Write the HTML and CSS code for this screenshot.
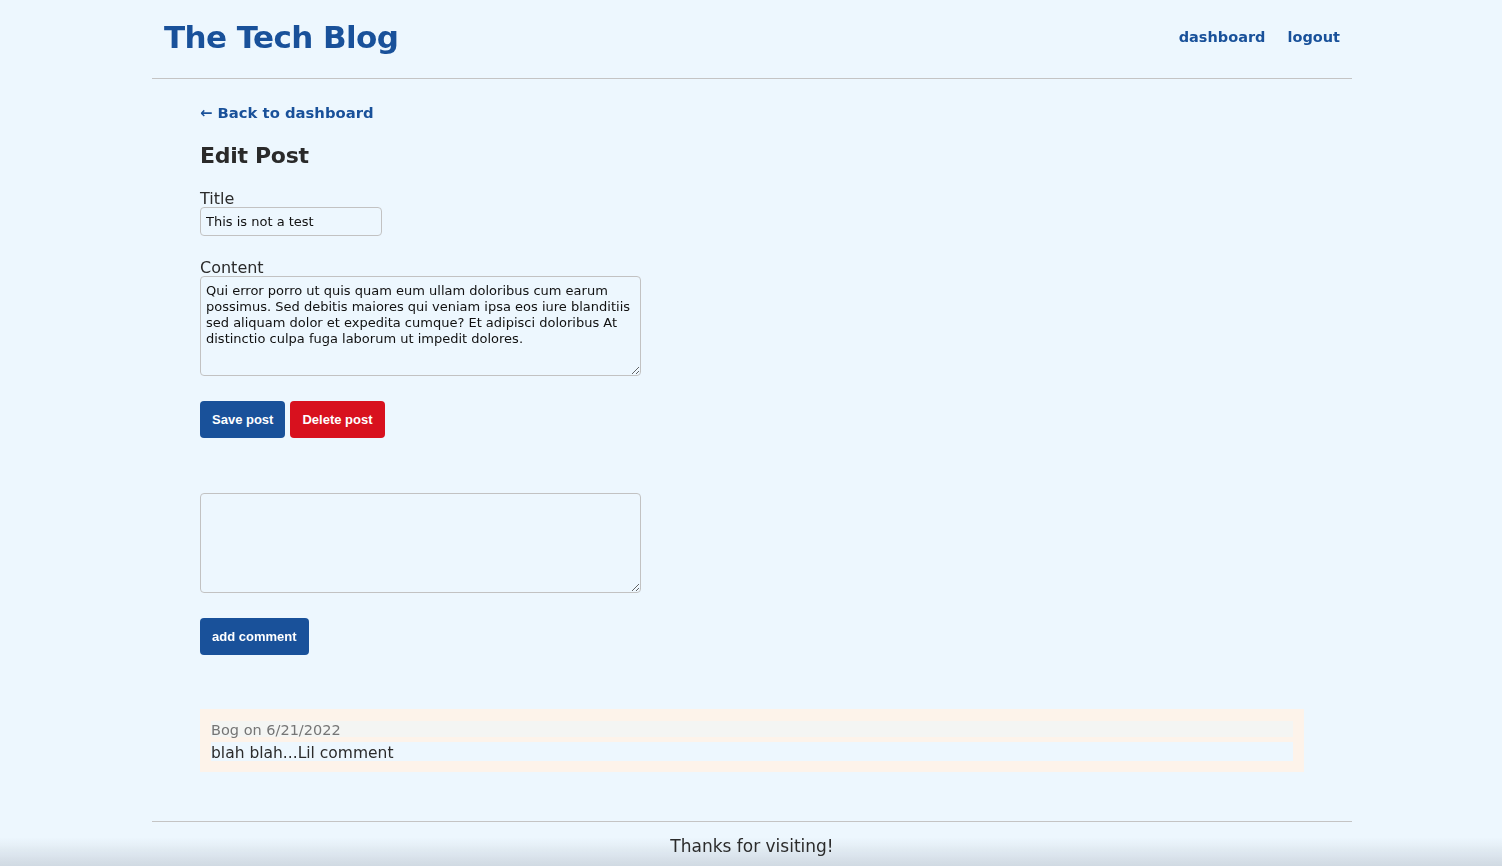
FILE: index.html
```html
<!DOCTYPE html>
<html lang="en">
<head>
<meta charset="utf-8">
<title>The Tech Blog</title>
<link rel="stylesheet" href="styles.css">
</head>
<body>
<div class="page">
  <header class="site-header">
    <a class="brand" href="#">The Tech Blog</a>
    <nav class="nav">
      <a href="#">dashboard</a>
      <a href="#">logout</a>
    </nav>
  </header>
  <main class="main">
    <a class="back" href="#">&larr; Back to dashboard</a>
    <h2 class="heading">Edit Post</h2>
    <form class="edit-form">
      <label class="label" for="title">Title</label>
      <input class="title-input" id="title" type="text" value="This is not a test">
      <label class="label label-content" for="content">Content</label>
      <textarea class="area" id="content">Qui error porro ut quis quam eum ullam doloribus cum earum possimus. Sed debitis maiores qui veniam ipsa eos iure blanditiis sed aliquam dolor et expedita cumque? Et adipisci doloribus At distinctio culpa fuga laborum ut impedit dolores.</textarea>
      <div class="actions">
        <button class="btn btn-blue" type="button">Save post</button>
        <button class="btn btn-red" type="button">Delete post</button>
      </div>
    </form>
    <form class="comment-form">
      <textarea class="area"></textarea>
      <div class="actions">
        <button class="btn btn-blue" type="button">add comment</button>
      </div>
    </form>
    <section class="comments">
      <div class="comment">
        <div class="comment-meta">Bog on 6/21/2022</div>
        <div class="comment-body">blah blah...Lil comment</div>
      </div>
    </section>
  </main>
  <footer class="site-footer">Thanks for visiting!</footer>
</div>
</body>
</html>
```
FILE: styles.css
```css
html, body {
  margin: 0;
  padding: 0;
}
body {
  background: #edf7fe;
  font-family: "DejaVu Sans", Verdana, sans-serif;
  color: #2b2b2b;
  min-height: 866px;
  position: relative;
}
body::after {
  content: "";
  position: fixed;
  left: 0;
  right: 0;
  bottom: 0;
  height: 28px;
  z-index: -1;
  background: linear-gradient(to bottom, rgba(237,247,254,0), rgba(208,217,226,1));
  pointer-events: none;
}
a {
  text-decoration: none;
  color: #19519a;
}
.page {
  width: 1200px;
  margin-left: calc(50% - 599px);
}
.site-header {
  display: flex;
  justify-content: space-between;
  align-items: center;
  height: 78px;
  padding: 0 12px;
  border-bottom: 1px solid #c4c4c4;
}
.brand {
  font-size: 31px;
  font-weight: bold;
  letter-spacing: -0.6px;
  padding-bottom: 4px;
}
.nav {
  display: flex;
  gap: 22px;
  padding-bottom: 4px;
}
.nav a {
  font-size: 14.5px;
  font-weight: bold;
}
.main {
  width: 92%;
  margin: 0 auto;
  padding-top: 24px;
  padding-bottom: 49px;
}
.back {
  display: block;
  font-size: 14.8px;
  font-weight: bold;
  line-height: 20px;
}
.heading {
  font-size: 22px;
  letter-spacing: -0.3px;
  margin: 17px 0 18px;
  line-height: 32px;
  color: #2a2a2a;
}
.edit-form, .comment-form {
  display: flex;
  flex-direction: column;
  align-items: flex-start;
}
.label {
  font-size: 16px;
  line-height: 17px;
}
.label-content {
  margin-top: 23px;
}
.title-input {
  box-sizing: border-box;
  width: 182px;
  height: 29px;
  border: 1px solid #c2c2c2;
  border-radius: 4px;
  background: #edf7fe;
  font-family: "DejaVu Sans", sans-serif;
  font-size: 13px;
  padding: 2px 5px;
  color: #111;
}
.area {
  box-sizing: border-box;
  width: 441px;
  height: 100px;
  border: 1px solid #c2c2c2;
  border-radius: 4px;
  background: #edf7fe;
  font-family: "DejaVu Sans", sans-serif;
  font-size: 13px;
  line-height: 16px;
  padding: 6px 5px 5px;
  color: #111;
}
.actions {
  display: flex;
  gap: 5px;
  margin-top: 25px;
}
.btn {
  height: 37px;
  border: none;
  border-radius: 4px;
  padding: 0 12px;
  font-family: "Liberation Sans", Arial, sans-serif;
  font-size: 13px;
  font-weight: bold;
  color: #fff;
}
.btn-blue {
  background: #19519a;
}
.btn-red {
  background: #d8111e;
}
.comment-form {
  margin-top: 55px;
}
.comments {
  margin-top: 54px;
}
.comment {
  background: #fdf3ea;
  padding: 12px 11px 11px;
}
.comment-meta {
  background: #f4f5f3;
  color: #757575;
  font-size: 14.5px;
  line-height: 14px;
  padding-top: 2px;
  margin-bottom: 5px;
}
.comment-body {
  background: #edf7fe;
  font-size: 15.5px;
  line-height: 15px;
  padding-top: 4px;
}
.site-footer {
  border-top: 1px solid #c4c4c4;
  text-align: center;
  font-size: 17px;
  padding-top: 14px;
  line-height: 20px;
}
```
